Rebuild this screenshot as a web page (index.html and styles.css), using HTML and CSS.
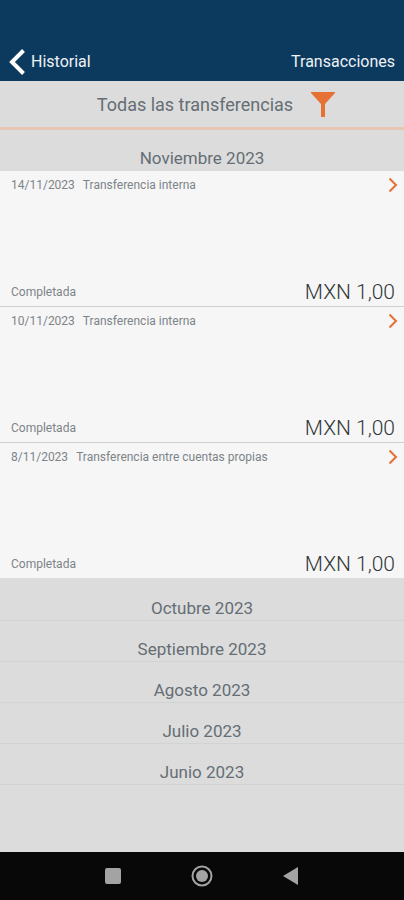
FILE: index.html
```html
<!DOCTYPE html>
<html lang="es">
<head>
  <meta charset="UTF-8">
  <meta name="viewport" content="width=device-width, initial-scale=1">
  <title>Transacciones</title>
  <link rel="stylesheet" href="styles.css">
</head>
<body>
  <header class="header">
    <a class="header__back" href="#">
      <svg width="16" height="26" viewBox="0 0 16 26" aria-hidden="true"><path d="M14.500 1.500L3 13L14.500 24.500" fill="none" stroke="#fff" stroke-width="4"/></svg>
      Historial
    </a>
    <h1 class="header__title">Transacciones</h1>
  </header>

  <main class="content">
    <button class="filter" type="button">
      Todas las transferencias
      <svg width="24" height="26" viewBox="0 0 24 26" aria-hidden="true"><path d="M0 0H24V1L14 12V25H10V12L0 1Z" fill="#e57234"/></svg>
    </button>

    <button class="month month--open" type="button">Noviembre 2023</button>
    <ul class="transfers">
      <li>
        <a class="transfer" href="#">
          <span class="transfer__row">
            <span class="transfer__date">14/11/2023</span>
            <span>Transferencia interna</span>
            <svg class="transfer__arrow" width="10" height="16" viewBox="0 0 10 16" aria-hidden="true"><path d="M1.500 1.500L8 8L1.500 14.500" fill="none" stroke="#e57234" stroke-width="2"/></svg>
          </span>
          <span class="transfer__row">
            <span>Completada</span>
            <span class="transfer__amount">MXN 1,00</span>
          </span>
        </a>
      </li>
      <li>
        <a class="transfer" href="#">
          <span class="transfer__row">
            <span class="transfer__date">10/11/2023</span>
            <span>Transferencia interna</span>
            <svg class="transfer__arrow" width="10" height="16" viewBox="0 0 10 16" aria-hidden="true"><path d="M1.500 1.500L8 8L1.500 14.500" fill="none" stroke="#e57234" stroke-width="2"/></svg>
          </span>
          <span class="transfer__row">
            <span>Completada</span>
            <span class="transfer__amount">MXN 1,00</span>
          </span>
        </a>
      </li>
      <li>
        <a class="transfer" href="#">
          <span class="transfer__row">
            <span class="transfer__date">8/11/2023</span>
            <span>Transferencia entre cuentas propias</span>
            <svg class="transfer__arrow" width="10" height="16" viewBox="0 0 10 16" aria-hidden="true"><path d="M1.500 1.500L8 8L1.500 14.500" fill="none" stroke="#e57234" stroke-width="2"/></svg>
          </span>
          <span class="transfer__row">
            <span>Completada</span>
            <span class="transfer__amount">MXN 1,00</span>
          </span>
        </a>
      </li>
    </ul>

    <button class="month" type="button">Octubre 2023</button>
    <button class="month" type="button">Septiembre 2023</button>
    <button class="month" type="button">Agosto 2023</button>
    <button class="month" type="button">Julio 2023</button>
    <button class="month" type="button">Junio 2023</button>
  </main>

  <nav class="navbar">
    <button class="navbar__button" type="button" aria-label="Recientes">
      <svg width="22" height="22" viewBox="0 0 22 22"><rect x="3" y="3" width="16" height="16" rx="2" fill="#a3a3a3"/></svg>
    </button>
    <button class="navbar__button" type="button" aria-label="Inicio">
      <svg width="22" height="22" viewBox="0 0 22 22"><circle cx="11" cy="11" r="9.500" fill="none" stroke="#a3a3a3" stroke-width="2"/><circle cx="11" cy="11" r="6" fill="#a3a3a3"/></svg>
    </button>
    <button class="navbar__button" type="button" aria-label="Atrás">
      <svg width="22" height="22" viewBox="0 0 22 22"><path d="M3 11L18 2V20Z" fill="#a3a3a3"/></svg>
    </button>
  </nav>
</body>
</html>
```

FILE: styles.css
```css
* {
  box-sizing: border-box;
}

body {
  margin: 0;
  min-height: 100vh;
  display: flex;
  flex-direction: column;
  background: #dcdcdc;
  color: #656e75;
  font-family: Roboto, "Liberation Sans", sans-serif;
}

button {
  border: 0;
  padding: 0;
  background: none;
  color: inherit;
  font: inherit;
  cursor: pointer;
}

a {
  color: inherit;
  text-decoration: none;
}

svg {
  display: block;
  flex: none;
}

/* header */
.header {
  display: flex;
  justify-content: space-between;
  align-items: center;
  padding: 49px 9px 6px;
  background: #0c3a5f;
  color: #eef2f5;
  font-size: 16px;
  line-height: 26px;
}

.header__back {
  display: flex;
  align-items: center;
  gap: 6px;
}

.header__title {
  margin: 0;
  font-size: 16px;
  font-weight: 400;
}

/* content */
.content {
  flex: 1;
  display: flex;
  flex-direction: column;
}

.filter {
  display: flex;
  justify-content: center;
  align-items: center;
  gap: 18px;
  padding: 11px 0 9px 28px;
  border-bottom: 3px solid #e8c6b4;
  font-size: 18px;
  line-height: 26px;
}

.month {
  padding: 18px 0 2px;
  border-bottom: 1px solid #d2d4d4;
  font-size: 17px;
  line-height: 20px;
}

.month--open {
  border-bottom-color: #dcdcdc;
}

/* transfers */
.transfers {
  margin: 0 0 2px;
  padding: 0;
  list-style: none;
  background: #f6f6f6;
}

.transfers li + li {
  border-top: 1px solid #cfd0d2;
}

.transfer {
  display: flex;
  flex-direction: column;
  justify-content: space-between;
  min-height: 135px;
  padding: 6px 9px 2px 11px;
  color: #7d8489;
  font-size: 12px;
  line-height: 16px;
}

.transfer__row {
  display: flex;
  align-items: center;
}

.transfer__date {
  margin-right: 8px;
}

.transfer__arrow {
  margin-left: auto;
  margin-right: -3px;
}

.transfer__amount {
  margin-left: auto;
  color: #30363c;
  font-size: 21px;
  font-weight: 300;
  line-height: 24px;
}

/* system buttons */
.navbar {
  display: flex;
  justify-content: center;
  gap: 67px;
  padding: 13px 0;
  background: #080808;
}
```
